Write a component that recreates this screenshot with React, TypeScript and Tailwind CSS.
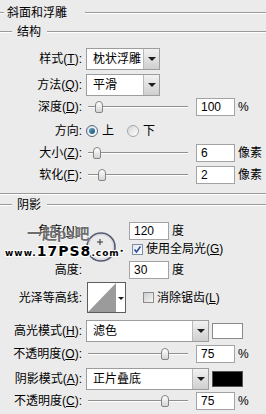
import React from 'react'

function U({ c }: { c: string }) {
  return <span className="underline decoration-1 underline-offset-[1px]">{c}</span>
}

function Label({ children }: { children: React.ReactNode }) {
  return <div className="w-[82px] shrink-0 text-right text-[12px] leading-[14px] whitespace-nowrap">{children}</div>
}

function Arrow() {
  return <div className="h-0 w-0 border-l-[4px] border-r-[4px] border-t-[4px] border-l-transparent border-r-transparent border-t-[#1e1e1e]" />
}

function Select({ value, w }: { value: string; w: string }) {
  return (
    <div className={`ml-[4px] flex h-[22px] ${w} border border-[#9d9d9d] bg-white`}>
      <div className="flex flex-1 items-center overflow-hidden whitespace-nowrap pl-[6px] text-[12px]">{value}</div>
      <div className="flex w-[16px] items-center justify-center border-l border-[#b9b9b9] bg-linear-to-b from-[#f2f2f2] to-[#cfcfcf]">
        <Arrow />
      </div>
    </div>
  )
}

function Num({ v, w = 'w-[39px]' }: { v: string; w?: string }) {
  return (
    <div className={`flex h-[18px] ${w} items-center border border-[#a3a3a3] bg-white pl-[4px] text-[12px] leading-none`}>
      {v}
    </div>
  )
}

function Slider({ thumb }: { thumb: string }) {
  return (
    <div className="relative ml-[2px] h-[14px] w-[100px]">
      <div className="absolute left-0 right-0 top-[6px] h-[2px] border-t border-b border-t-[#8f8f8f] border-b-white" />
      <div className={`absolute top-[1px] ${thumb} h-[12px] w-[8px] rounded-t-[4px] rounded-b-[2px] border border-[#858585] bg-linear-to-b from-white to-[#d4d4d4]`} />
    </div>
  )
}

function Radio({ on }: { on?: boolean }) {
  return on ? (
    <div className="flex h-[12px] w-[12px] items-center justify-center rounded-full border border-[#55657a] bg-linear-to-br from-[#d9dee5] to-white">
      <div className="h-[6px] w-[6px] rounded-full bg-linear-to-br from-[#5fa7c9] to-[#1d4f72]" />
    </div>
  ) : (
    <div className="h-[12px] w-[12px] rounded-full border border-[#a3a7ad] bg-linear-to-br from-[#d6d6d6] to-white" />
  )
}

function Check({ on }: { on?: boolean }) {
  return on ? (
    <div className="flex h-[11px] w-[11px] items-center justify-center border border-[#7e90a8] bg-linear-to-br from-[#e4e8ee] to-white">
      <svg width="9" height="9" viewBox="0 0 9 9">
        <polyline points="1.5,4.5 3.5,7 7.5,1.5" fill="none" stroke="#2a4c9c" strokeWidth="1.6" />
      </svg>
    </div>
  ) : (
    <div className="h-[11px] w-[11px] border border-[#8c8c8c] bg-linear-to-br from-[#cdcdcd] to-[#f6f6f6]" />
  )
}

function Header({ text, lead, gap }: { text: string; lead: string; gap: string }) {
  return (
    <>
      <div className={`${lead} h-[2px] border-t border-b border-t-[#9a9a9a] border-b-white`} />
      <span className="ml-[3px] text-[12px] leading-[14px]">{text}</span>
      <div className={`${gap} h-[2px] flex-1 border-t border-b border-t-[#9a9a9a] border-b-white`} />
    </>
  )
}

export default function App() {
  return (
    <div className="relative h-[414px] w-[266px] overflow-hidden bg-[#ebebeb] font-['Liberation_Sans','Noto_Sans_CJK_SC',sans-serif] text-black">
      {/* 斜面和浮雕 */}
      <div className="mt-[2px] flex h-[22px] items-center">
        <Header text="斜面和浮雕" lead="w-[4px]" gap="ml-[18px]" />
      </div>
      <div className="flex h-[16px] items-center">
        <Header text="结构" lead="w-[12px] mr-[2px]" gap="ml-[6px]" />
      </div>

      <div className="mt-[8px] flex h-[22px] items-center">
        <Label>样式(<U c="T" />):</Label>
        <Select value="枕状浮雕" w="w-[74px]" />
      </div>
      <div className="mt-[4px] flex h-[22px] items-center">
        <Label>方法(<U c="Q" />):</Label>
        <Select value="平滑" w="w-[74px]" />
      </div>

      <div className="mt-[2px] flex h-[18px] items-center">
        <Label>深度(<U c="D" />):</Label>
        <div className="ml-[4px]" />
        <Slider thumb="left-[7px]" />
        <div className="ml-[8px]"><Num v="100" /></div>
        <span className="ml-[3px] text-[12px]">%</span>
      </div>

      <div className="mt-[6px] flex h-[18px] items-center text-[12px]">
        <Label>方向:</Label>
        <div className="ml-[4px]"><Radio on /></div>
        <span className="ml-[4px]">上</span>
        <div className="ml-[13px]"><Radio /></div>
        <span className="ml-[4px]">下</span>
      </div>

      <div className="mt-[4px] flex h-[18px] items-center">
        <Label>大小(<U c="Z" />):</Label>
        <div className="ml-[4px]" />
        <Slider thumb="left-[5px]" />
        <div className="ml-[8px]"><Num v="6" /></div>
        <span className="ml-[3px] text-[12px]">像素</span>
      </div>
      <div className="mt-[4px] flex h-[18px] items-center">
        <Label>软化(<U c="F" />):</Label>
        <div className="ml-[4px]" />
        <Slider thumb="left-[10px]" />
        <div className="ml-[8px]"><Num v="2" /></div>
        <span className="ml-[3px] text-[12px]">像素</span>
      </div>

      <div className="mt-[9px] h-[2px] border-t border-b border-t-[#9a9a9a] border-b-white" />

      {/* 阴影 */}
      <div className="mt-[1px] flex h-[18px] items-center">
        <Header text="阴影" lead="w-[12px] mr-[2px]" gap="ml-[6px]" />
      </div>

      <div className="mt-[8px] flex">
        <div className="flex flex-col">
          <div className="flex h-[18px] items-center"><Label>角度(<U c="N" />):</Label></div>
          <div className="h-[18px]" />
          <div className="mt-[3px] flex h-[18px] items-center"><Label>高度:</Label></div>
        </div>
        <div className="ml-[4px] mt-[10px] h-[30px] w-[30px]">
          <svg width="30" height="30" viewBox="0 0 30 30">
            <circle cx="15" cy="15" r="14" fill="none" stroke="#565a74" strokeWidth="1.6" />
            <circle cx="15" cy="15" r="12.6" fill="none" stroke="#c9cad3" strokeWidth="0.8" />
            <line x1="14" y1="7" x2="14" y2="13" stroke="#333" strokeWidth="1" />
            <line x1="11" y1="10" x2="17" y2="10" stroke="#333" strokeWidth="1" />
          </svg>
        </div>
        <div className="ml-[13px] flex flex-col text-[12px]">
          <div className="flex h-[18px] items-center">
            <Num v="120" w="w-[40px]" />
            <span className="ml-[3px]">度</span>
          </div>
          <div className="flex h-[18px] items-center">
            <div className="ml-[3px]"><Check on /></div>
            <span className="ml-[3px] whitespace-nowrap">使用全局光(<U c="G" />)</span>
          </div>
          <div className="mt-[3px] flex h-[18px] items-center">
            <Num v="30" w="w-[40px]" />
            <span className="ml-[3px]">度</span>
          </div>
        </div>
      </div>

      <div className="mt-[3px] flex h-[31px] items-center">
        <Label>光泽等高线:</Label>
        <div className="ml-[5px] flex h-[31px] w-[39px] border border-[#5e5e5e] bg-white">
          <svg width="28" height="29" viewBox="0 0 28 29">
            <polygon points="0,29 28,0 28,29" fill="#9b9b9b" />
          </svg>
          <div className="flex flex-1 items-center justify-center pt-[1px]">
            <div className="h-0 w-0 border-l-[3px] border-r-[3px] border-t-[3px] border-l-transparent border-r-transparent border-t-[#1e1e1e]" />
          </div>
        </div>
        <div className="ml-[17px]"><Check /></div>
        <span className="ml-[3px] text-[12px] whitespace-nowrap">消除锯齿(<U c="L" />)</span>
      </div>

      <div className="mt-[7px] flex h-[22px] items-center">
        <Label>高光模式(<U c="H" />):</Label>
        <Select value="滤色" w="w-[123px]" />
        <div className="ml-[3px] h-[16px] w-[31px] border border-[#8a8a8a] bg-white" />
      </div>
      <div className="mt-[3px] flex h-[18px] items-center">
        <Label>不透明度(<U c="O" />):</Label>
        <div className="ml-[4px]" />
        <Slider thumb="left-[73px]" />
        <div className="ml-[8px]"><Num v="75" /></div>
        <span className="ml-[3px] text-[12px]">%</span>
      </div>
      <div className="mt-[5px] flex h-[22px] items-center">
        <Label>阴影模式(<U c="A" />):</Label>
        <Select value="正片叠底" w="w-[123px]" />
        <div className="ml-[3px] h-[16px] w-[31px] border border-[#555] bg-black" />
      </div>
      <div className="mt-[2px] flex h-[18px] items-center">
        <Label>不透明度(<U c="C" />):</Label>
        <div className="ml-[4px]" />
        <Slider thumb="left-[73px]" />
        <div className="ml-[8px]"><Num v="75" /></div>
        <span className="ml-[3px] text-[12px]">%</span>
      </div>

      {/* watermark */}
      <div className="absolute left-[27px] top-[226px] text-[15px] font-bold leading-none text-[#555]/85 [text-shadow:0_0_2px_#fff]">
        一起ps吧
      </div>
      <div className="absolute left-[5px] top-[244px] flex items-end font-['DejaVu_Sans',sans-serif] font-bold leading-none tracking-[1px] text-black [text-shadow:1px_1px_0_#fff,-1px_-1px_0_#fff,1px_-1px_0_#fff,-1px_1px_0_#fff]">
        <span className="text-[9px]">www.</span>
        <span className="text-[14px]">17PS8</span>
        <span className="text-[9px]">.com</span>
        <span className="mb-[4px] text-[6px]">•</span>
      </div>
    </div>
  )
}
